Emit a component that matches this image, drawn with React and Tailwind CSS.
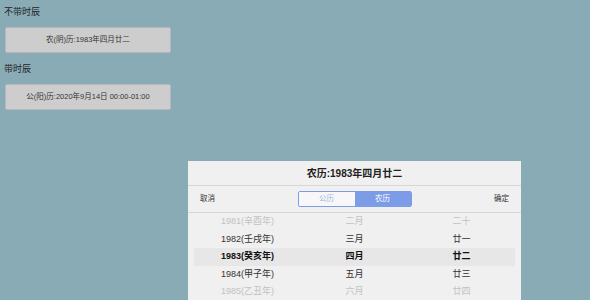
import React from 'react'

const font = { fontFamily: '"Liberation Sans", "Noto Sans CJK SC", sans-serif' }

const years = ['1981(辛酉年)', '1982(壬戌年)', '1983(癸亥年)', '1984(甲子年)', '1985(乙丑年)']
const months = ['二月', '三月', '四月', '五月', '六月']
const days = ['二十', '廿一', '廿二', '廿三', '廿四']

const rowTone = (i) => {
  if (i === 2) return 'text-[#111] font-bold bg-[#e7e7e7]'
  if (i === 0 || i === 4) return 'text-[#c2c2c2]'
  return 'text-[#333]'
}

const App = () => {
  return (
    <div style={font} className="relative w-[590px] h-[300px] overflow-hidden bg-[#89abb6]">
      <div className="pt-[4px] pl-[4px]">
        <p className="h-[16px] leading-[16px] text-[9px] text-[#222]">不带时辰</p>
        <button className="mt-[7px] ml-[1px] w-[166px] h-[26px] rounded-[2px] border border-[#b4b8ba] bg-[#cdcdcd] text-[7.5px] text-[#333] flex items-center justify-center">
          农(阴)历:1983年四月廿二
        </button>
        <p className="mt-[8px] h-[16px] leading-[16px] text-[9px] text-[#222]">带时辰</p>
        <button className="mt-[7px] ml-[1px] w-[166px] h-[26px] rounded-[2px] border border-[#b4b8ba] bg-[#cdcdcd] text-[7.5px] text-[#333] flex items-center justify-center">
          公(阳)历:2020年9月14日 00:00-01:00
        </button>
      </div>

      {/* picker sheet */}
      <div className="absolute left-[188px] top-[161px] w-[333px] h-[150px] bg-[#f0f0f0]">
        <div className="h-[25px] border-b border-[#d6d6d6] flex items-center justify-center text-[10px] font-bold text-[#222]">
          农历:1983年四月廿二
        </div>
        <div className="h-[27px] border-b border-[#d6d6d6] flex items-center px-[12px] text-[7.5px] text-[#333]">
          <span className="flex-1">取消</span>
          <div className="flex w-[114px] h-[16px] rounded-[2px] border border-[#7d9ce8] overflow-hidden">
            <span className="flex-1 flex items-center justify-center bg-[#f7f7f7] text-[#9fb4ec]">公历</span>
            <span className="flex-1 flex items-center justify-center bg-[#7d9ce8] text-white">农历</span>
          </div>
          <span className="flex-1 text-right pr-[-1px]">确定</span>
        </div>
        <div className="px-[6px]">
          {years.map((y, i) => (
            <div key={y} className={`grid grid-cols-3 h-[17.6px] items-center text-center text-[9px] ${rowTone(i)}`}>
              <span>{y}</span>
              <span>{months[i]}</span>
              <span>{days[i]}</span>
            </div>
          ))}
        </div>
      </div>
    </div>
  )
}

export default App
